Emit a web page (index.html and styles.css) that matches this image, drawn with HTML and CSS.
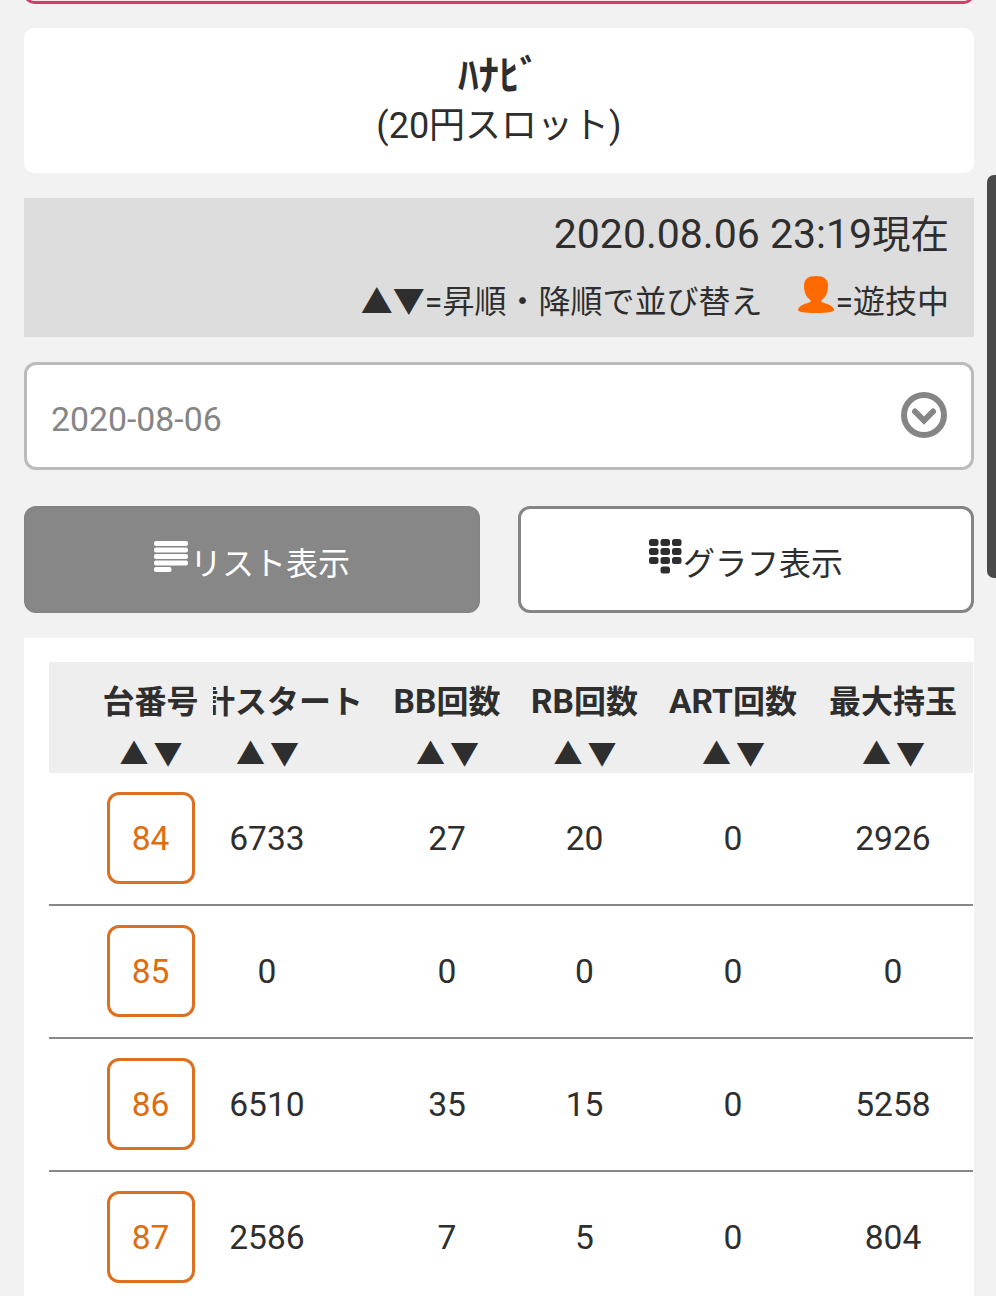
FILE: index.html
```html
<!DOCTYPE html>
<html lang="ja">
<head>
  <meta charset="UTF-8">
  <meta name="viewport" content="width=device-width, initial-scale=1.0">
  <title>ﾊﾅﾋﾞ (20円スロット)</title>
  <link rel="stylesheet" href="styles.css">
</head>
<body>
  <div class="page">
    <div class="prev-box"></div>

    <header class="title-box">
      <h1>ﾊﾅﾋﾞ</h1>
      <p>(20円スロット)</p>
    </header>

    <div class="info">
      <p class="time"><span class="time-num">2020.08.06 23:19</span>現在</p>
      <p class="legend">
        <span class="legend-sort">▲▼=昇順・降順で並び替え</span>
        <svg class="icon-user" viewBox="0 0 36 37"><path d="M18 0C26 0 30 3 30 10C30 17 27 22 23.500 24V26C29 28 35 29 36 34Q36 37 18 37T0 34C1 29 7 28 12.500 26V24C9 22 6 17 6 10C6 3 10 0 18 0Z"/></svg>
        <span class="legend-play">=遊技中</span>
      </p>
    </div>

    <div class="select">
      <span>2020-08-06</span>
      <svg class="icon-down" viewBox="0 0 46 46"><circle cx="23" cy="23" r="20"/><path d="M14 19.500l9 9 9-9"/></svg>
    </div>

    <div class="buttons">
      <a class="btn active" href="#">
        <svg class="icon-list" viewBox="0 0 34 31"><rect width="34" height="5" rx="2"/><rect y="6.500" width="34" height="5" rx="2"/><rect y="13" width="34" height="5" rx="2"/><rect y="19.500" width="34" height="5" rx="2"/><rect y="26" width="17.500" height="5" rx="2"/></svg>
        <span>リスト表示</span>
      </a>
      <a class="btn" href="#">
        <svg class="icon-grid" viewBox="0 0 33 35"><rect width="9.500" height="7" rx="2.500"/><rect x="11.500" width="9.500" height="7" rx="2.500"/><rect x="23" width="9.500" height="7" rx="2.500"/><rect y="9" width="9.500" height="7" rx="2.500"/><rect x="11.500" y="9" width="9.500" height="7" rx="2.500"/><rect x="23" y="9" width="9.500" height="7" rx="2.500"/><rect y="18" width="9.500" height="7" rx="2.500"/><rect x="11.500" y="18" width="9.500" height="7" rx="2.500"/><rect x="23" y="18" width="9.500" height="7" rx="2.500"/><rect x="11.500" y="27.500" width="9.500" height="7" rx="2.500"/></svg>
        <span>グラフ表示</span>
      </a>
    </div>

    <div class="list">
      <div class="row head">
        <div class="cell"><b>台番号</b><i>▲▼</i></div>
        <div class="cell"><b class="cut"><span>計スタート</span></b><i>▲▼</i></div>
        <div class="cell"><b><span class="en">BB</span>回数</b><i>▲▼</i></div>
        <div class="cell"><b><span class="en">RB</span>回数</b><i>▲▼</i></div>
        <div class="cell"><b><span class="en">ART</span>回数</b><i>▲▼</i></div>
        <div class="cell"><b>最大持玉</b><i>▲▼</i></div>
      </div>
      <div class="row">
        <div class="cell"><a class="dai" href="#">84</a></div>
        <div class="cell">6733</div>
        <div class="cell">27</div>
        <div class="cell">20</div>
        <div class="cell">0</div>
        <div class="cell">2926</div>
      </div>
      <div class="row">
        <div class="cell"><a class="dai" href="#">85</a></div>
        <div class="cell">0</div>
        <div class="cell">0</div>
        <div class="cell">0</div>
        <div class="cell">0</div>
        <div class="cell">0</div>
      </div>
      <div class="row">
        <div class="cell"><a class="dai" href="#">86</a></div>
        <div class="cell">6510</div>
        <div class="cell">35</div>
        <div class="cell">15</div>
        <div class="cell">0</div>
        <div class="cell">5258</div>
      </div>
      <div class="row">
        <div class="cell"><a class="dai" href="#">87</a></div>
        <div class="cell">2586</div>
        <div class="cell">7</div>
        <div class="cell">5</div>
        <div class="cell">0</div>
        <div class="cell">804</div>
      </div>
    </div>
  </div>
  <div class="scrollbar"></div>
</body>
</html>
```

FILE: styles.css
```css
* {
  margin: 0;
  padding: 0;
  box-sizing: border-box;
}

body {
  height: 1296px;
  overflow: hidden;
  position: relative;
  background-color: #f2f2f2;
  color: #2e2e2e;
  font-family: Roboto, "Noto Sans CJK JP", sans-serif;
}

a {
  color: inherit;
  text-decoration: none;
}

.page {
  width: 950px;
  margin-left: 24px;
}

/* bottom edge of the box above */
.prev-box {
  height: 16px;
  margin-top: -12px;
  background-color: #fbe3ea;
  border: 3px solid #cf4068;
  border-radius: 0 0 10px 10px;
}

.title-box {
  height: 145px;
  margin-top: 24px;
  padding-top: 22px;
  background-color: #fff;
  border-radius: 10px;
  text-align: center;
}

.title-box h1 {
  font-size: 41px;
  line-height: 52px;
}

.title-box p {
  font-size: 36px;
  line-height: 48px;
}

/* date and legend */
.info {
  height: 139px;
  margin-top: 25px;
  padding: 8px 25px 0;
  background-color: #ddd;
  text-align: right;
}

.time {
  font-size: 38.5px;
  line-height: 56px;
}

.time-num {
  font-size: 41px;
}

.legend {
  display: flex;
  justify-content: flex-end;
  height: 76px;
  font-size: 32px;
  line-height: 78px;
}

.icon-user {
  width: 36px;
  height: 37px;
  margin: 13px 1px 0 36px;
  fill: #ff6a00;
}

.select {
  display: flex;
  align-items: center;
  justify-content: space-between;
  height: 108px;
  margin-top: 25px;
  padding: 0 24px 0 24px;
  background-color: #fff;
  border: 3px solid #bbb;
  border-radius: 12px;
  color: #858585;
  font-size: 33.8px;
}

.select span {
  padding-top: 6px;
}

.icon-down {
  width: 46px;
  height: 46px;
  margin-bottom: 2px;
  fill: none;
  stroke: #858585;
  stroke-width: 6;
  stroke-linecap: round;
}

.buttons {
  display: flex;
  justify-content: space-between;
  margin-top: 36px;
}

.btn {
  display: flex;
  align-items: center;
  justify-content: center;
  width: 456px;
  height: 107px;
  background-color: #fff;
  border: 3px solid #858585;
  border-radius: 12px;
  font-size: 32px;
}

.btn span {
  padding-top: 3px;
}

.active {
  background-color: #878787;
  color: #fff;
}

.icon-list {
  width: 34px;
  height: 31px;
  margin: 0 2px 6px 0;
  fill: #fff;
}

.icon-grid {
  width: 33px;
  height: 35px;
  margin: 0 1px 6px 0;
  fill: #2e2e2e;
}

/* table */
.list {
  height: 670px;
  margin-top: 25px;
  padding: 24px 1px 0 25px;
  background-color: #fff;
}

.row {
  display: grid;
  grid-template-columns: 164px 108px 195px 137px 160px 160px;
  height: 133px;
  border-bottom: 2px solid #888;
}

.cell {
  display: flex;
  align-items: center;
  justify-content: center;
  padding-bottom: 1px;
  font-size: 33.6px;
}

.cell:first-child {
  padding-left: 39px;
}

.cell:nth-child(3) {
  padding-left: 57px;
}

.head {
  height: 111px;
  background-color: #eee;
  border-bottom: none;
}

.head .cell {
  flex-direction: column;
  justify-content: flex-start;
  font-size: 32px;
  white-space: nowrap;
}

.head b {
  height: 68px;
  line-height: 80px;
}

.en {
  font-size: 33.6px;
}

.cut {
  align-self: flex-start;
  width: 150px;
  overflow: hidden;
}

.cut span {
  margin-left: -10px;
}

.head i {
  font-size: 29px;
  font-style: normal;
  line-height: 50px;
  letter-spacing: 5px;
  margin-right: -6px;
}

.dai {
  display: flex;
  align-items: center;
  justify-content: center;
  width: 88px;
  height: 92px;
  border: 3px solid #dc7020;
  border-radius: 12px;
  color: #e06c10;
}

.scrollbar {
  position: absolute;
  top: 175px;
  right: 0;
  width: 9px;
  height: 403px;
  background-color: #4a4a4a;
  border-radius: 7px 0 0 7px;
}
```
